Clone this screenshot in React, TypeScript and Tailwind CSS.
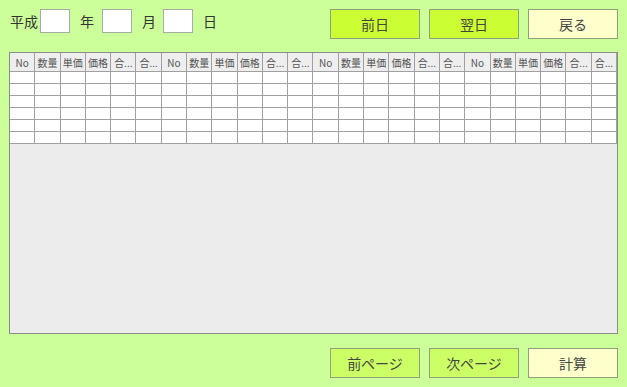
import React from "react";

const heads = ["No", "数量", "単価", "価格", "合...", "合..."];
const cols = [...heads, ...heads, ...heads, ...heads];
const rows = [0, 1, 2, 3, 4, 5];

function DateBox() {
  return <div className="w-[30px] h-[24px] bg-white border border-[#a8aaa8]" />;
}

function Btn({ label, tone }: { label: string; tone: "lime" | "soft" | "cream" }) {
  const bg =
    tone === "lime" ? "bg-[#ccff33]" : tone === "soft" ? "bg-[#ccff66]" : "bg-[#ffffcc]";
  return (
    <button className={`w-[90px] h-[30px] ${bg} border border-[#8fa07a] text-[14px] text-[#444]`}>
      {label}
    </button>
  );
}

export default function App() {
  return (
    <div
      className="w-[627px] h-[387px] bg-[#ccff99] flex flex-col"
      style={{ fontFamily: '"Noto Sans CJK JP", "Noto Sans", sans-serif' }}
    >
      <div className="flex items-start pt-[9px] pl-[10px] pr-[9px]">
        <div className="flex items-center h-[24px] text-[14px] text-[#333]">
          <span className="mr-[2px]">平成</span>
          <DateBox />
          <span className="ml-[10px] mr-[8px]">年</span>
          <DateBox />
          <span className="ml-[10px] mr-[7px]">月</span>
          <DateBox />
          <span className="ml-[10px]">日</span>
        </div>
        <div className="ml-auto flex gap-[9px]">
          <Btn label="前日" tone="lime" />
          <Btn label="翌日" tone="lime" />
          <Btn label="戻る" tone="cream" />
        </div>
      </div>

      <div className="mt-[13px] ml-[9px] w-[609px] h-[282px] bg-[#ececec] border border-[#8c8c8c]">
        <div className="grid grid-cols-[repeat(24,minmax(0,1fr))] w-[607px]">
          {cols.map((h, i) => (
            <div
              key={"h" + i}
              className="h-[19px] bg-[#eeeeee] border-r border-b border-[#a0a0a0] flex items-center justify-center text-[10px] text-[#555] overflow-hidden whitespace-nowrap"
            >
              {h}
            </div>
          ))}
          {rows.map((r) =>
            cols.map((_, i) => (
              <div key={r + "-" + i} className="h-[12px] bg-white border-r border-b border-[#a0a0a0]" />
            ))
          )}
        </div>
      </div>

      <div className="flex justify-end gap-[9px] mt-[14px] pr-[9px]">
        <Btn label="前ページ" tone="soft" />
        <Btn label="次ページ" tone="soft" />
        <Btn label="計算" tone="cream" />
      </div>
    </div>
  );
}
